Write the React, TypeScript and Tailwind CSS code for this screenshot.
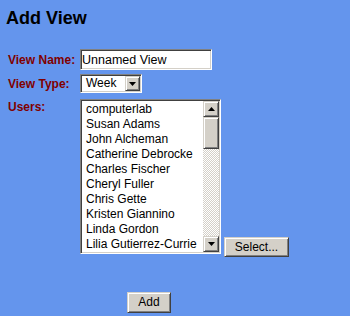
const users = [
  "computerlab",
  "Susan Adams",
  "John Alcheman",
  "Catherine Debrocke",
  "Charles Fischer",
  "Cheryl Fuller",
  "Chris Gette",
  "Kristen Giannino",
  "Linda Gordon",
  "Lilia Gutierrez-Currie",
];

// classic sunken / raised edges
const sunken =
  "border border-t-[#808080] border-l-[#808080] border-b-white border-r-white shadow-[inset_1px_1px_#404040,inset_-1px_-1px_#d4d0c8]";
const raised =
  "bg-[#d4d0c8] border border-t-[#d4d0c8] border-l-[#d4d0c8] border-b-[#404040] border-r-[#404040] shadow-[inset_1px_1px_#fff,inset_-1px_-1px_#808080]";

function Arrow({ up }: { up?: boolean }) {
  return (
    <svg width="7" height="4" viewBox="0 0 7 4">
      <path d={up ? "M3.5 0L7 4H0Z" : "M0 0H7L3.5 4Z"} fill="#000" />
    </svg>
  );
}

function Button({ label, className }: { label: string; className: string }) {
  return (
    <button className={`${raised} ${className} flex items-center justify-center text-[12px] leading-[15px]`}>
      {label}
    </button>
  );
}

export default function App() {
  return (
    <div className="w-[350px] h-[316px] bg-[#6495ed] font-['Liberation_Sans',Arial,sans-serif] text-black">
      <h1 className="pl-[6px] pt-[8px] text-[18px] leading-[21px] font-bold">Add View</h1>

      <div className="mt-[20px] pl-[8px] flex flex-col">
        <div className="flex items-center h-[21px]">
          <label className="w-[72px] text-[12px] leading-[14px] font-bold text-[#800000]">View Name:</label>
          <input
            defaultValue="Unnamed View"
            className={`${sunken} w-[132px] h-[21px] bg-white px-[1px] text-[12.5px] outline-none`}
          />
        </div>

        <div className="flex items-center h-[19px] mt-[4px]">
          <label className="w-[72px] text-[12px] leading-[14px] font-bold text-[#800000]">View Type:</label>
          <div className={`${sunken} w-[62px] h-[19px] bg-white flex items-center p-[1px]`}>
            <span className="flex-1 pl-[4px] text-[12px] leading-[15px]">Week</span>
            <div className={`${raised} w-[15px] h-[15px] flex items-center justify-center`}>
              <Arrow />
            </div>
          </div>
        </div>

        <div className="flex items-end mt-[6px]">
          <label className="self-start w-[72px] pt-[1px] text-[12px] leading-[14px] font-bold text-[#800000]">Users:</label>
          <div className={`${sunken} w-[141px] h-[155px] bg-white p-[1px] flex`}>
            <div className="flex-1 overflow-hidden pt-[1px] pl-[4px]">
              {users.map((u) => (
                <div key={u} className="text-[12px] leading-[15px] whitespace-nowrap">
                  {u}
                </div>
              ))}
            </div>
            <div className="w-[16px] flex flex-col">
              <div className={`${raised} h-[16px] flex items-center justify-center`}>
                <Arrow up />
              </div>
              <div className={`${raised} h-[32px]`} />
              <div className="flex-1 bg-[repeating-conic-gradient(#d4d0c8_0_25%,#fff_0_50%)] bg-[length:2px_2px]" />
              <div className={`${raised} h-[16px] flex items-center justify-center`}>
                <Arrow />
              </div>
            </div>
          </div>
          <Button label="Select..." className="ml-[3px] mb-[-3px] w-[65px] h-[20px]" />
        </div>

        <Button label="Add" className="mt-[38px] ml-[119px] w-[44px] h-[21px]" />
      </div>
    </div>
  );
}
